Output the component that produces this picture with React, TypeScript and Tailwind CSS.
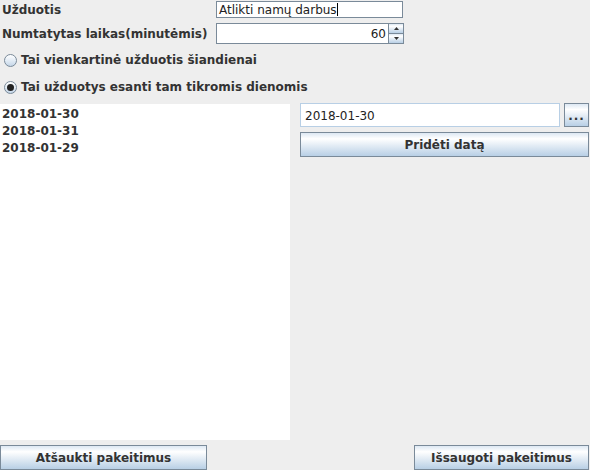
import React from "react";

const btn =
  "border border-[#7a8a99] bg-[linear-gradient(to_bottom,#dde8f3_0%,#ffffff_25%,#b8cfe5_100%)] flex items-center justify-center font-bold text-[12px] text-[#333333]";

function Radio({ checked, label }: { checked: boolean; label: string }) {
  return (
    <div className="flex items-center h-[22px] pl-[4px]">
      <div className="w-[13px] h-[13px] rounded-full border border-[#7a8a99] bg-[linear-gradient(to_bottom,#ffffff_0%,#dde8f3_60%,#c5d6e8_100%)] flex items-center justify-center">
        {checked && <div className="w-[7px] h-[7px] rounded-full bg-[#222222]" />}
      </div>
      <span className="ml-[4px] font-bold text-[12px] text-[#333333]">{label}</span>
    </div>
  );
}

export default function App() {
  return (
    <div
      className="w-[590px] h-[470px] bg-[#eeeeee] flex flex-col overflow-hidden"
      style={{ fontFamily: "'DejaVu Sans', sans-serif" }}
    >
      <div className="flex items-center h-[17px] mt-[1px]">
        <div className="w-[216px] pl-[2px] font-bold text-[12px] text-[#333333]">Užduotis</div>
        <div className="w-[187px] h-[17px] border border-[#7a8a99] bg-white flex items-center pl-[2px] text-[12px] text-[#222222]">
          Atlikti namų darbus<span className="inline-block w-[1px] h-[13px] bg-black" />
        </div>
      </div>
      <div className="flex items-center h-[21px] mt-[5px]">
        <div className="w-[216px] pl-[2px] font-bold text-[12px] text-[#333333]">Numtatytas laikas(minutėmis)</div>
        <div className="w-[173px] h-[21px] border border-[#7a8a99] bg-white flex items-center justify-end pr-[2px] text-[12px] text-[#222222]">
          60
        </div>
        <div className="w-[15px] h-[21px] flex flex-col">
          <div className={btn + " h-[11px] border-l-0"}>
            <svg width="5" height="3" viewBox="0 0 5 3"><path d="M2.5 0 L5 3 L0 3 Z" fill="#333" /></svg>
          </div>
          <div className={btn + " h-[10px] border-l-0 border-t-0"}>
            <svg width="5" height="3" viewBox="0 0 5 3"><path d="M0 0 L5 0 L2.5 3 Z" fill="#333" /></svg>
          </div>
        </div>
      </div>
      <div className="mt-[5px]">
        <Radio checked={false} label="Tai vienkartinė užduotis šiandienai" />
      </div>
      <div className="mt-[5px]">
        <Radio checked={true} label="Tai užduotys esanti tam tikromis dienomis" />
      </div>
      <div className="flex mt-[6px] h-[336px]">
        <div className="w-[290px] h-full bg-white pl-[2px] pt-[2px] font-bold text-[12px] text-[#333333] leading-[17px]">
          <div>2018-01-30</div>
          <div>2018-01-31</div>
          <div>2018-01-29</div>
        </div>
        <div className="ml-[10px] flex-1 flex flex-col pr-[1px]">
          <div className="flex h-[24px] mt-[-1px]">
            <div className="flex-1 border border-[#b8cfe5] bg-white flex items-center pl-[4px] pt-[1px] text-[12px] text-[#222222]">
              2018-01-30
            </div>
            <div className={btn + " w-[25px] ml-[4px]"}>
              <span className="text-[#333333] tracking-[1px] leading-none mt-[1px]">...</span>
            </div>
          </div>
          <div className={btn + " h-[25px] mt-[5px]"}>Pridėti datą</div>
        </div>
      </div>
      <div className="flex justify-between mt-[5px] pr-[1px]">
        <div className={btn + " w-[207px] h-[25px]"}>Atšaukti pakeitimus</div>
        <div className={btn + " w-[175px] h-[25px]"}>Išsaugoti pakeitimus</div>
      </div>
    </div>
  );
}
